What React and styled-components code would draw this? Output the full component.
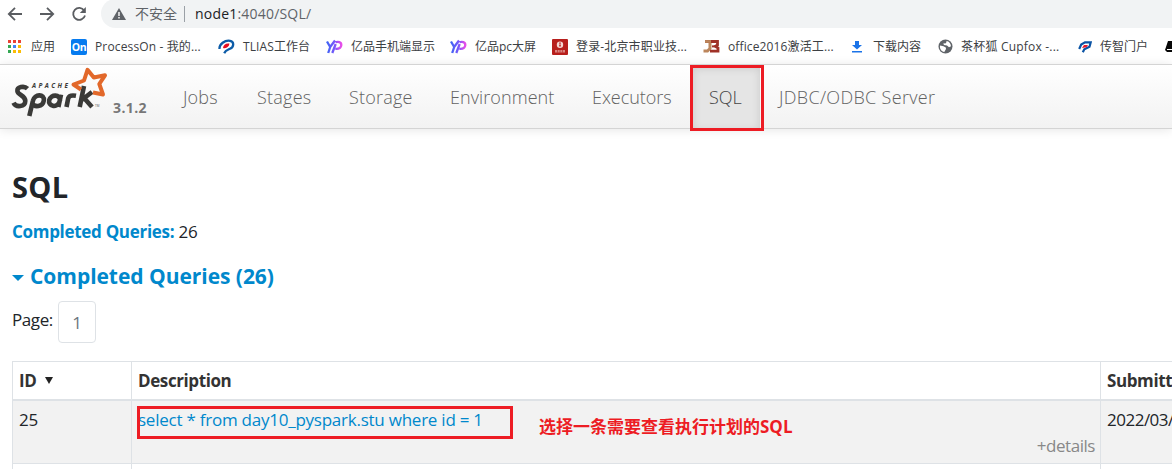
import React from 'react';
import styled, { createGlobalStyle } from 'styled-components';

const Global = createGlobalStyle`
  * { box-sizing: border-box; }
  body { margin: 0; background: #fff; overflow: hidden; font-family: "Open Sans", "Noto Sans CJK SC", sans-serif; color: #212529; }
`;

const Window = styled.div`width: 1172px; height: 469px; overflow: hidden; position: relative;`;

const Toolbar = styled.div`
  height: 28px; display: flex; align-items: center; padding-left: 7px;
`;
const ToolButton = styled.span`
  width: 16px; height: 16px; margin-right: 16px; display: flex; color: #5a5d61;
  svg { width: 16px; height: 16px; }
`;
const AddressBar = styled.div`
  flex: 1; height: 29px; margin: -1px 0 0 -2px; padding-left: 10px; border-radius: 15px 0 0 15px;
  background: #f1f3f4; display: flex; align-items: center; color: #5f6368; font-size: 14px; line-height: 20px;
  svg { flex: none; }
`;
const Insecure = styled.span`margin-left: 8px; width: 42px; white-space: nowrap;`;
const Divider = styled.i`width: 1px; height: 16px; background: #9aa0a6; margin: 0 10px 0 7px;`;
const Url = styled.span`
  font-size: 14px; letter-spacing: 0.2px; white-space: nowrap;
  b { font-weight: 400; color: #202124; }
`;

const Bookmarks = styled.div`
  height: 36px; white-space: nowrap; display: flex; align-items: center; padding: 1px 0 0 8px;
`;
const Bookmark = styled.div`
  flex: none; width: ${p => p.$w}px; display: flex; align-items: center; gap: ${p => p.$gap || 8}px;
  font-size: 12px; line-height: 16px; color: #3c4043; letter-spacing: ${p => p.$ls || 0}px;
  svg { flex: none; }
`;

const Navbar = styled.nav`
  height: 65px; border: 1px solid #d4d4d4; border-width: 1px 0; display: flex;
  background: linear-gradient(#fff, #f2f2f2); box-shadow: 0 1px 10px rgba(0,0,0,.1);
`;
const Brand = styled.div`width: 167px; padding-left: 12px; display: flex; svg { flex: none; margin-top: 2px; }`;
const Version = styled.span`font-size: 14px; font-weight: 700; color: #777; line-height: 20px; margin: 33px 0 0 8px; letter-spacing: 0.4px;`;
const NavLink = styled.a`
  flex: none; width: ${p => p.$w}px; margin-right: ${p => p.$gap || 0}px; padding-left: 16px;
  line-height: 64px; font-size: 18px; font-weight: 300; white-space: nowrap;
  letter-spacing: ${p => p.$ls}px; color: ${p => (p.$active ? '#444' : '#626262')};
  ${p => p.$active && 'background: #e5e5e5; box-shadow: inset 0 3px 8px rgba(0,0,0,.125);'}
`;

const Content = styled.main`padding: 38px 0 0 12px;`;
const Title = styled.h3`margin: 0; font-size: 29px; font-weight: 700; line-height: 39px; letter-spacing: 0.3px;`;
const Summary = styled.div`
  margin-top: 14px; line-height: 24px; font-size: 17px; letter-spacing: -0.2px;
  a { font-weight: 700; color: #0088cc; letter-spacing: -0.3px; }
`;
const Section = styled.h4`
  margin: 17px 0 0; display: flex; align-items: center; gap: 6px; font-size: 21px; line-height: 31px; font-weight: 700;
  color: #0088cc; letter-spacing: -0.04px;
`;
const Caret = styled.i`border: 6px solid transparent; border-top-color: currentColor; border-bottom: 0; margin-top: 3px;`;
const Pager = styled.div`margin-top: 9px; display: flex; font-size: 17px; line-height: 38px; letter-spacing: -0.4px;`;
const PageLink = styled.a`
  width: 38px; height: 42px; margin-left: 5px; border: 1px solid #dee2e6; border-radius: 4px; text-align: center; line-height: 41px; color: #6c757d;
`;

const Table = styled.div`
  margin-top: 18px; width: 1300px; display: grid; grid-template-columns: 119px 969px 1fr;
  border: 1px solid #dee2e6; border-width: 1px 0 0 1px; font-size: 17px; line-height: 24px;
`;
const Cell = styled.div`
  height: ${p => p.$h}px; padding: 7px 5px 0 6px; border-right: 1px solid #dee2e6; border-bottom: 1px solid #dee2e6; white-space: nowrap;
  letter-spacing: ${p => p.$ls || 0}px;
  ${p => p.$head && 'font-weight: 700; border-bottom-width: 2px; color: #333;'}
  ${p => p.$odd && 'background: #f2f2f2;'}
`;
const SortMark = styled.span`display: inline-block; margin-left: 9px; vertical-align: 3px; border: 4px solid transparent; border-top: 7px solid #222; border-bottom: 0;`;
const QueryLink = styled.a`display: block; color: #0088cc; letter-spacing: -0.24px;`;
const Details = styled.span`display: block; margin-top: 2px; text-align: right; color: #888; letter-spacing: -0.45px;`;

const Highlight = styled.div`
  position: absolute; border: 3px solid #ed1c24; left: ${p => p.$x}px; top: ${p => p.$y}px; width: ${p => p.$w}px; height: ${p => p.$h}px;
`;
const Note = styled.div`
  position: absolute; left: 539px; top: 414px; color: #ed1c24; font-weight: 700; font-size: 17px; line-height: 26px; white-space: nowrap;
`;

const AppsIcon = () => (
  <svg width="14" height="14" viewBox="0 0 14 14">
    {['#ea4335', '#ea4335', '#ea4335', '#34a853', '#4285f4', '#fbbc04', '#34a853', '#fbbc04', '#fbbc04'].map((c, i) => (
      <rect key={i} x={(i % 3) * 5} y={Math.floor(i / 3) * 5} width="3" height="3" fill={c} />
    ))}
  </svg>
);
const OnIcon = () => (
  <svg width="16" height="16" viewBox="0 0 16 16">
    <rect width="16" height="16" rx="2" fill="#067bef" />
    <text x="8" y="12" fontSize="10.5" fontWeight="700" fill="#fff" textAnchor="middle" fontFamily="Open Sans" letterSpacing="-.3">On</text>
  </svg>
);
const SwirlIcon = () => (
  <svg width="17" height="16" viewBox="0 0 17 16" fill="none">
    <path d="M1.5 10C1 5 7 1 12 1.8C16.5 2.6 16 8 12 9.8C9 11.2 7.6 11.2 6.2 14.2" stroke="#0c5ca8" strokeWidth="2.3" />
    <path d="M5 9C5.2 5.8 8 4 11.4 4.6C11.2 8 8.4 9.8 5 9Z" fill="#e60d20" />
  </svg>
);
const YpIcon = ({ id }) => (
  <svg width="17" height="16" viewBox="0 0 17 16" fill="none">
    <defs><linearGradient id={id} x1="0" y1="0" x2="17" y2="0" gradientUnits="userSpaceOnUse"><stop stopColor="#3866f4" /><stop offset=".5" stopColor="#7857fa" /><stop offset=".9" stopColor="#e94de8" /></linearGradient></defs>
    <path d="M1 2.5L4.2 8L9 1.5M4.2 8L2.2 14M6.3 14L9.7 5M9.5 3.3C12 2.2 15.5 3 15.3 6.2C15 9.3 12 10 9.4 9.8" stroke={`url(#${id})`} strokeWidth="2.3" />
  </svg>
);
const SchoolIcon = () => (
  <svg width="16" height="16" viewBox="0 0 16 16">
    <rect width="16" height="16" rx="1" fill="#b71f1c" />
    <circle cx="8" cy="5.7" r="3.2" fill="#f4d6d2" /><path d="M7.2 3.5h1.6v1.2H7.2zM7.2 5.4h1.6v2H7.2z" fill="#b71f1c" />
    <path d="M3 11h10v2.5H3z" fill="#d98580" /><path d="M5.5 11v2.5M8 11v2.5M10.5 11v2.5" stroke="#b71f1c" strokeWidth=".6" />
  </svg>
);
const JbIcon = () => (
  <svg width="17" height="15" viewBox="0 0 17 15" fill="none">
    <path d="M7 1.5V9.5L4.5 12H0.5" stroke="#bc865c" strokeWidth="3" />
    <path d="M2 2.5H14.5V6L12.5 7.3L15 9V12.2H7" stroke="#9f3127" strokeWidth="2.8" /><path d="M9 7.4h4" stroke="#9f3127" strokeWidth="2" />
    <path d="M2 2.5H8" stroke="#bc865c" strokeWidth="2.8" />
  </svg>
);
const DownloadIcon = () => (
  <svg width="10" height="13" viewBox="0 0 10 13" fill="#1a73e8"><path d="M3 1h4v4h3L5 9.5 0 5h3zM0 11h10v1.5H0z" /></svg>
);
const GlobeIcon = () => (
  <svg width="15" height="15" viewBox="0 0 15 15">
    <circle cx="7.5" cy="7.5" r="7" fill="#5f6368" />
    <path d="M2 6.5L5.5 7.3 7.8 8.4 8 10 6.3 13C3.5 12.6 1.4 9.8 2 6.5zM5.2 4.6L8 4.2 8.6 2.1C11 2.4 12.8 4.6 13 7.2L11 8.2 9 6.6 6 6z" fill="#fff" />
  </svg>
);
const PortalIcon = () => (
  <svg width="14" height="12" viewBox="0 0 14 12" fill="none">
    <path d="M1.2 8L3.2 3.5L7 1.3H12.7L11.5 5.7L6.3 8.3L4.8 11.3" stroke="#0b54a5" strokeWidth="2.2" /><path d="M4 7L6 4h4L8.5 6.3z" fill="#e8192a" />
  </svg>
);
const BookIcon = () => (
  <svg width="16" height="13" viewBox="0 0 16 13"><path d="M3 1H16V12H2L0 10z" fill="#080808" /><path d="M2 9.5h14" stroke="#fff" strokeWidth="1" /></svg>
);

const LogoText = styled.text`font-family: "Open Sans", sans-serif;`;
const SparkLogo = () => (
  <svg width="93" height="52" viewBox="0 0 93 52" fill="none" overflow="visible">
    <g stroke="#3a3a38" strokeWidth="4.6">
      <path d="M15.5 21.7C12 18.3 5 20 5.4 24C5.7 28 13.4 28.3 13.3 34C13.2 40 4 41 1.5 35.7" />
      <path d="M17.3 49L21 33.5C22.2 27 33 26.2 31.8 33.6C30.7 40 22.3 40.8 20 36" />
      <path d="M49 27.6L46.4 40M48 33.8C48.5 27.2 39 26.8 37.2 33.2C35.8 39.2 44.8 41.5 47.5 35" />
      <path d="M54.5 40L56.2 31.3C57 28.8 59.6 28 64 28.8M67.7 40L72 19M69.7 33L80 25M72.5 31.5L80 40" />
    </g>
    <path d="M69 22.5L61.5 17.5L72 13.5L75.5 2.8L81.8 10.5L93 8.3L87.3 17L91 27.5L81 25.5" strokeWidth="4" stroke="#e2682a" strokeLinejoin="round" />
    <LogoText x="20" y="20.5" fontSize="6.4" fontWeight="700" fontStyle="italic" fill="#3a3a38" textLength="36">APACHE</LogoText>
    <LogoText x="83" y="40" fontSize="3" fill="#555">TM</LogoText>
  </svg>
);

const links = [
  ['Jobs', 74, 0.15], ['Stages', 92, 0.25], ['Storage', 101, 0.2], ['Environment', 142, 0.08],
  ['Executors', 117, -0.05], ['SQL', 67, 0, 3], ['JDBC/ODBC Server', 190, 0.32],
];

export default function App() {
  return (
    <Window>
      <Global />
      <Toolbar>
        <ToolButton><svg viewBox="0 0 16 16" fill="none" stroke="currentColor" strokeWidth="1.8"><path d="M15 8H2M8 1.8L1.8 8L8 14.2" /></svg></ToolButton>
        <ToolButton><svg viewBox="0 0 16 16" fill="none" stroke="currentColor" strokeWidth="1.8"><path d="M1 8h13M8 1.8L14.2 8L8 14.2" /></svg></ToolButton>
        <ToolButton><svg viewBox="0 0 16 16" fill="none" stroke="currentColor" strokeWidth="1.8"><path d="M13.2 4.5A6 6 0 1 0 14 9.5" /><path d="M14.8 1v6h-6z" fill="currentColor" stroke="none" /></svg></ToolButton>
        <AddressBar>
          <svg width="16" height="14" viewBox="0 0 16 14"><path d="M8 1L15 13H1z" fill="#5f6368" /><path d="M8 5v4M8 10v1.5" stroke="#fff" strokeWidth="1.4" /></svg>
          <Insecure>不安全</Insecure><Divider /><Url><b>node1</b>:4040/SQL/</Url>
        </AddressBar>
      </Toolbar>
      <Bookmarks>
        <Bookmark $w={63} $gap={9}><AppsIcon />应用</Bookmark>
        <Bookmark $w={147} $ls={0.14}><OnIcon />ProcessOn - 我的...</Bookmark>
        <Bookmark $w={108} $ls={0.1}><SwirlIcon />TLIAS工作台</Bookmark>
        <Bookmark $w={124}><YpIcon id="ypa" />亿品手机端显示</Bookmark>
        <Bookmark $w={102}><YpIcon id="ypb" />亿品pc大屏</Bookmark>
        <Bookmark $w={151} $ls={0.15}><SchoolIcon />登录-北京市职业技...</Bookmark>
        <Bookmark $w={149} $ls={0.13}><JbIcon />office2016激活工...</Bookmark>
        <Bookmark $w={86} $gap={11}><DownloadIcon />下载内容</Bookmark>
        <Bookmark $w={140} $ls={0.2}><GlobeIcon />茶杯狐 Cupfox -...</Bookmark>
        <Bookmark $w={87}><PortalIcon />传智门户</Bookmark>
        <Bookmark $w={16}><BookIcon /></Bookmark>
      </Bookmarks>
      <Navbar>
        <Brand><SparkLogo /><Version>3.1.2</Version></Brand>
        {links.map(([t, w, ls, gap]) => <NavLink key={t} $w={w} $ls={ls} $gap={gap} $active={t === 'SQL'}>{t}</NavLink>)}
      </Navbar>
      <Content>
        <Title>SQL</Title>
        <Summary><a>Completed Queries:</a> 26</Summary>
        <Section><Caret />Completed Queries (26)</Section>
        <Pager>Page:<PageLink>1</PageLink></Pager>
        <Table>
          <Cell $head $h={39} $ls={-0.4}>ID<SortMark /></Cell>
          <Cell $head $h={39} $ls={-0.4}>Description</Cell>
          <Cell $head $h={39} $ls={-0.4}>Submitted</Cell>
          <Cell $odd $h={63} $ls={-0.3}>25</Cell>
          <Cell $odd $h={63}>
            <QueryLink>select * from day10_pyspark.stu where id = 1</QueryLink>
            <Details>+details</Details>
          </Cell>
          <Cell $odd $h={63} $ls={-0.5}>2022/03/18</Cell>
          <Cell $h={63} /><Cell $h={63} /><Cell $h={63} />
        </Table>
      </Content>
      <Highlight $x={690} $y={65} $w={74} $h={66} />
      <Highlight $x={137} $y={406} $w={376} $h={33} />
      <Note>选择一条需要查看执行计划的SQL</Note>
    </Window>
  );
}
